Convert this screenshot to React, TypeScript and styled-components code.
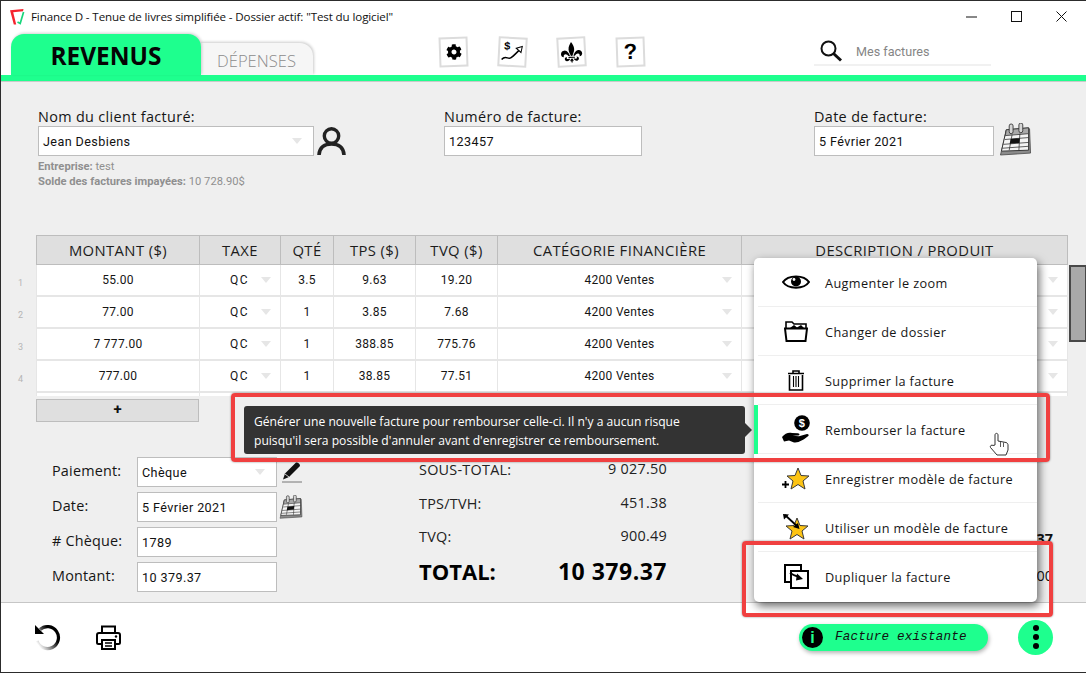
import styled, { createGlobalStyle } from "styled-components";
import { FaCog } from "react-icons/fa";
import { GiFleurDeLys } from "react-icons/gi";

const green = "#1EFF8E";
const lineGrey = "#BDBDBD";
const uiFont = `"Open Sans", "Noto Sans", sans-serif`;
const fieldFont = `Roboto, "Liberation Sans", sans-serif`;

const GlobalStyle = createGlobalStyle`
  html, body { margin: 0; padding: 0; background: #fff; }
  * { box-sizing: border-box; }
`;

const Window = styled.div`
  position: relative;
  width: 1086px;
  height: 673px;
  overflow: hidden;
  display: flex;
  flex-direction: column;
  background: #fff;
  border-top: 1px solid #2c2c2c;
  border-bottom: 1px solid #2c2c2c;
  border-left: 1px solid #2c2c2c;
  font-family: ${uiFont};
  color: #111;
`;

const TitleBar = styled.div`
  height: 31px;
  flex: none;
  display: flex;
  align-items: center;
  padding-left: 9px;
  gap: 6px;
  font-size: 11.6px;
  letter-spacing: -0.12px;
`;

const WindowControls = styled.div`
  margin-left: auto;
  padding-right: 2px;
  display: flex;
  align-items: center;
`;

const ControlBox = styled.span`
  width: 45px;
  height: 31px;
  display: flex;
  align-items: center;
  justify-content: center;
`;

const TabBar = styled.div`
  height: 43px;
  flex: none;
  display: flex;
  align-items: flex-end;
  padding-left: 10px;
`;

const ActiveTab = styled.div`
  width: 190px;
  height: 41px;
  background: ${green};
  border-radius: 13px 13px 0 0;
  box-shadow: 1px -1px 3px rgba(0, 0, 0, 0.18);
  font-size: 24.4px;
  font-weight: 700;
  line-height: 44px;
  text-align: center;
  color: #050505;
  position: relative;
  z-index: 1;
`;

const IdleTab = styled.div`
  width: 113px;
  height: 32px;
  margin-left: -1px;
  background: #f6f6f6;
  border-radius: 0 13px 0 0;
  box-shadow: 1px -1px 3px rgba(0, 0, 0, 0.2);
  font-size: 16.6px;
  font-weight: 300;
  line-height: 35px;
  text-align: center;
  color: #8c8c8c;
`;

const ToolIcons = styled.div`
  display: flex;
  gap: 30px;
  margin-left: 126px;
  align-self: flex-start;
  padding-top: 5px;
`;

const Sticker = styled.span<{ $tilt: number }>`
  width: 29px;
  height: 30px;
  display: flex;
  align-items: center;
  justify-content: center;
  background: #fff;
  border: 2px solid #dcdcdc;
  transform: rotate(${(p) => p.$tilt}deg);
  font-family: "Liberation Sans", sans-serif;
  font-size: 22px;
  font-weight: 700;
  color: #000;
`;

const SearchBox = styled.div`
  width: 177px;
  height: 28px;
  margin-left: 169px;
  align-self: flex-start;
  margin-top: 6px;
  display: flex;
  align-items: center;
  padding-left: 5px;
  border-bottom: 2px solid #f1f1f1;
`;

const SearchHint = styled.span`
  margin-left: 13px;
  padding-top: 1px;
  font-family: ${fieldFont};
  font-size: 12.6px;
  color: #858585;
`;

const GreenBar = styled.div`
  height: 7px;
  flex: none;
  background: ${green};
  border-bottom: 1px solid #c9c9c9;
`;

const Body = styled.main`
  height: 520px;
  flex: none;
  background: #efefef;
  display: flex;
  flex-direction: column;
`;

const TopForm = styled.section`
  height: 153px;
  flex: none;
  display: flex;
  padding: 25px 0 0 37px;
`;

const FieldGroup = styled.div<{ $width: number }>`
  width: ${(p) => p.$width}px;
  flex: none;
`;

const FieldLabel = styled.div`
  font-size: 14.4px;
  letter-spacing: 0.35px;
  line-height: 19px;
  color: #151515;
`;

const InputRow = styled.div`
  display: flex;
  align-items: center;
  height: 30px;
`;

const InputBox = styled.div<{ $width: number }>`
  width: ${(p) => p.$width}px;
  height: 30px;
  flex: none;
  display: flex;
  align-items: center;
  justify-content: space-between;
  padding: 0 11px 0 4px;
  background: #fff;
  border: 1px solid ${lineGrey};
  font-family: ${fieldFont};
  font-size: 12.6px;
  letter-spacing: 0.4px;
  color: #111;
`;

const Arrow = styled.i`
  display: inline-block;
  width: 0;
  height: 0;
  border-left: 5px solid transparent;
  border-right: 5px solid transparent;
  border-top: 6px solid #e6e6e6;
`;

const InfoBlock = styled.div`
  margin-top: 3px;
`;

const InfoLine = styled.div`
  font-family: ${fieldFont};
  font-size: 11.2px;
  line-height: 15px;
  color: #8f8f8f;
  b { font-weight: 700; }
`;

const CalendarSlot = styled.span`
  margin: -4px 0 0 5px;
  display: flex;
`;

const TableArea = styled.section`
  display: flex;
  flex: none;
  height: 161px;
`;

const TableClip = styled.div`
  width: 1068px;
  height: 161px;
  overflow: hidden;
`;

const GridRow = styled.div`
  display: grid;
  grid-template-columns: 35px 163px 81px 53px 82px 82px 244px 327px;
`;

const Gutter = styled.div`
  font-family: ${fieldFont};
  font-size: 9px;
  color: #b5b5b5;
  display: flex;
  align-items: center;
  justify-content: flex-end;
  padding: 3px 13px 0 0;
`;

const HeadCell = styled.div`
  height: 30px;
  background: #dfdfdf;
  border-top: 1px solid ${lineGrey};
  border-bottom: 1px solid ${lineGrey};
  border-left: 1px solid ${lineGrey};
  font-size: 14.8px;
  letter-spacing: 0.4px;
  line-height: 28px;
  text-align: center;
  color: #1c1c1c;
  &:last-child { border-right: 1px solid ${lineGrey}; }
`;

const Cell = styled.div`
  height: 32px;
  padding-bottom: 1px;
  background: #fff;
  border-bottom: 2px solid #e6e6e6;
  border-left: 1px solid #e6e6e6;
  font-family: ${fieldFont};
  font-size: 12px;
  letter-spacing: 0.3px;
  display: flex;
  align-items: center;
  justify-content: center;
  position: relative;
  color: #151515;
  &:last-child { border-right: 1px solid #e6e6e6; }
`;

const TaxCode = styled.span`
  margin-right: 1px;
  letter-spacing: 1.4px;
`;

const CellArrow = styled(Arrow)`
  position: absolute;
  right: 9px;
  top: 12px;
`;

const ScrollTrack = styled.div`
  width: 17px;
  flex: none;
  padding: 30px 0 0 0;
`;

const ScrollThumb = styled.div`
  width: 17px;
  height: 77px;
  background: #a9a9a9;
  border: 2px solid #484848;
  border-right: 1px solid #484848;
`;

const AddButton = styled.div`
  width: 163px;
  height: 23px;
  margin: 3px 0 0 35px;
  flex: none;
  background: #dfdfdf;
  border: 1px solid ${lineGrey};
  font-family: ${fieldFont};
  font-size: 15px;
  font-weight: 700;
  line-height: 19px;
  text-align: center;
`;

const BottomArea = styled.section`
  margin-top: 35px;
  display: flex;
  flex: none;
`;

const PaymentGrid = styled.div`
  width: 351px;
  flex: none;
  padding-left: 51px;
  display: grid;
  grid-template-columns: 85px 140px 30px;
  grid-auto-rows: 30px;
  row-gap: 5px;
  align-items: center;
  font-size: 14.4px;
  letter-spacing: 0.2px;
  line-height: 19px;
`;

const PayLabel = styled.div`
  margin-top: -3px;
  color: #151515;
`;

const IconSlot = styled.div<{ $left: number }>`
  padding-left: ${(p) => p.$left}px;
  display: flex;
  align-items: center;
`;

const TotalsTable = styled.div`
  width: 248px;
  margin-left: 67px;
  flex: none;
`;

const TotalLine = styled.div<{ $big?: boolean }>`
  display: flex;
  justify-content: space-between;
  align-items: flex-start;
  height: ${(p) => (p.$big ? 36 : 33.5)}px;
  font-size: ${(p) => (p.$big ? 22 : 14.4)}px;
  font-weight: ${(p) => (p.$big ? 700 : 400)};
  letter-spacing: ${(p) => (p.$big ? 0 : 0.25)}px;
  line-height: 26px;
  color: ${(p) => (p.$big ? "#000" : "#222")};
`;

const TotalValue = styled.span`
  line-height: 23px;
`;

const GrandValue = styled.span`
  font-size: 23px;
  letter-spacing: 0.5px;
`;

const SideValues = styled.div`
  flex: 1;
  padding: 63px 33px 0 0;
  text-align: right;
  font-size: 14.4px;
  line-height: 37px;
`;

const Footer = styled.footer`
  height: 70px;
  flex: none;
  display: flex;
  align-items: center;
  border-top: 1px solid #c6c6c6;
  padding: 0 33px 1px 33px;
`;

const FooterTools = styled.div`
  display: flex;
  gap: 35px;
  align-items: center;
`;

const StatusPill = styled.div`
  margin-left: auto;
  width: 189px;
  height: 27px;
  display: flex;
  align-items: center;
  gap: 12px;
  padding-left: 3px;
  background: ${green};
  border-radius: 14px;
  box-shadow: 1px 2px 4px rgba(0, 0, 0, 0.3);
  font-family: "Liberation Mono", monospace;
  font-size: 12.6px;
  font-style: italic;
  letter-spacing: 0.2px;
  color: #111;
`;

const InfoDot = styled.span`
  width: 21px;
  height: 21px;
  border-radius: 50%;
  background: #000;
  color: ${green};
  font-family: "Liberation Sans", sans-serif;
  font-style: normal;
  font-size: 16px;
  font-weight: 700;
  line-height: 22px;
  text-align: center;
`;

const MoreButton = styled.div`
  width: 35px;
  height: 35px;
  margin-left: 30px;
  border-radius: 50%;
  background: ${green};
  display: flex;
  flex-direction: column;
  align-items: center;
  justify-content: center;
  gap: 3px;
  span {
    width: 6px;
    height: 6px;
    border-radius: 50%;
    background: #000;
  }
`;

const Menu = styled.div`
  position: absolute;
  left: 753px;
  top: 257px;
  width: 283px;
  height: 344px;
  background: #fff;
  border-radius: 5px;
  box-shadow: 2px 4px 10px rgba(0, 0, 0, 0.6);
  padding-left: 4px;
`;

const MenuItem = styled.div<{ $active?: boolean }>`
  position: relative;
  height: 49px;
  display: flex;
  align-items: center;
  padding-left: 20px;
  gap: 11px;
  font-size: 12.7px;
  letter-spacing: 0.39px;
  color: #161616;
  border-bottom: 1px solid #efefef;
  &:last-child { border-bottom-color: transparent; }
  ${(p) =>
    p.$active &&
    `&::before {
      content: "";
      position: absolute;
      left: -4px;
      top: 0;
      bottom: -1px;
      width: 4px;
      background: ${green};
    }`}
`;

const MenuIcon = styled.span`
  width: 36px;
  height: 36px;
  flex: none;
  display: flex;
  align-items: center;
  justify-content: center;
`;

const MenuLabel = styled.span`
  padding-top: 2px;
`;

const HandCursor = styled.svg`
  position: absolute;
  left: 988px;
  top: 430px;
`;

const Tooltip = styled.div`
  position: absolute;
  left: 243px;
  top: 405px;
  width: 501px;
  height: 48px;
  padding: 6px 0 0 10px;
  background: #333;
  border-radius: 3px;
  color: #fff;
  font-size: 12.1px;
  line-height: 19px;
  &::after {
    content: "";
    position: absolute;
    right: -7px;
    top: 17px;
    border-top: 7px solid transparent;
    border-bottom: 7px solid transparent;
    border-left: 7px solid #333;
  }
`;

const RedFrame = styled.div<{ $x: number; $y: number; $w: number; $h: number }>`
  position: absolute;
  left: ${(p) => p.$x}px;
  top: ${(p) => p.$y}px;
  width: ${(p) => p.$w}px;
  height: ${(p) => p.$h}px;
  border: 4px solid #f04040;
  border-radius: 4px;
  box-shadow: 0 0 2px rgba(0, 0, 0, 0.5);
`;

const rows = [
  ["1", "55.00", "3.5", "9.63", "19.20"],
  ["2", "77.00", "1", "3.85", "7.68"],
  ["3", "7 777.00", "1", "388.85", "775.76"],
  ["4", "777.00", "1", "38.85", "77.51"],
];

const heads = ["MONTANT ($)", "TAXE", "QTÉ", "TPS ($)", "TVQ ($)", "CATÉGORIE FINANCIÈRE", "DESCRIPTION / PRODUIT"];

const starPath = "M12 1 L15 8.5 L23 9 L17 14 L19 22 L12 17.5 L5 22 L7 14 L1 9 L9 8.5 Z";

function Logo() {
  return (
    <svg width="15" height="16" viewBox="0 0 15 16">
      <path d="M0 1.2 L13.5 0 L13 2.2 L3.2 3.2 L6.2 15.5 L3.8 15.5 Z" fill="#f5232e" />
      <path d="M7.5 13 L10.2 14.5 L13.6 3" fill="none" stroke="#19d67c" strokeWidth="1.7" />
    </svg>
  );
}

function PersonIcon() {
  return (
    <svg width="32" height="30" viewBox="0 0 32 30">
      <circle cx="17.5" cy="10" r="7.2" fill="none" stroke="#222" strokeWidth="3.4" />
      <path d="M5 29 C5.5 21 11 18 17.5 18 C24 18 29.5 21 30 29" fill="none" stroke="#222" strokeWidth="3.6" />
    </svg>
  );
}

function CalendarIcon({ size }: { size: number }) {
  return (
    <svg width={size} height={size} viewBox="0 0 33 34">
      <path d="M7 8 L31 6 L32 31 L1 33 Z" fill="#8b8b8b" stroke="#444" strokeWidth="0.8" />
      <path d="M7 7 L30 5 L30 28 L2 29 Z" fill="#f4f4f4" stroke="#333" strokeWidth="1" />
      <path d="M7 7 L30 5 L30 11 L6 13 Z" fill="#a9a9a9" stroke="#333" strokeWidth="0.8" />
      <path d="M5.5 17 L30 15 M4 22 L30 20 M3 26 L30 24 M13 12 L10 28 M21 11 L20 28" stroke="#333" strokeWidth="0.8" />
      <path d="M11.5 16.5 L21 15.6 L20.5 20.6 L10.5 21.5 Z" fill="#111" />
      <rect x="10" y="1" width="4" height="10" rx="2" fill="#d5d5d5" stroke="#333" strokeWidth="0.9" />
      <rect x="20" y="0" width="4" height="10" rx="2" fill="#d5d5d5" stroke="#333" strokeWidth="0.9" />
    </svg>
  );
}

function ChartIcon() {
  return (
    <svg width="25" height="26" viewBox="0 0 25 26">
      <text x="4" y="11" fontFamily="Liberation Sans, sans-serif" fontSize="11" fontWeight="700" fill="#000">$</text>
      <path d="M2 21 C6 16 8 21 11 19 C14 17 15 15 20 10" fill="none" stroke="#000" strokeWidth="1.5" />
      <path d="M16 9 L22 7 L21 13 Z" fill="#fff" stroke="#000" strokeWidth="1" />
    </svg>
  );
}

function SearchIcon() {
  return (
    <svg width="24" height="22" viewBox="0 0 24 22">
      <circle cx="9.5" cy="8.5" r="7" fill="none" stroke="#111" strokeWidth="2" />
      <path d="M14.5 13.5 L22 20.5" stroke="#111" strokeWidth="3" />
    </svg>
  );
}

function EyeIcon() {
  return (
    <svg width="28" height="18" viewBox="0 0 28 18">
      <path d="M1 9 C6 1.5 22 1.5 27 9 C22 16.5 6 16.5 1 9 Z" fill="none" stroke="#000" strokeWidth="2" />
      <circle cx="14" cy="8.5" r="5" fill="#000" />
      <circle cx="12" cy="6.5" r="1.4" fill="#fff" />
    </svg>
  );
}

function FolderIcon() {
  return (
    <svg width="24" height="21" viewBox="0 0 24 21">
      <path d="M2 8 V1 H8 L10 3 H22 V8" fill="none" stroke="#000" strokeWidth="1.6" />
      <path d="M6 7 L10 4 L13 6.5 L17 4 L20 7 Z" fill="#000" />
      <path d="M1 7.5 H23 L21.5 20 H2.5 Z" fill="#fff" stroke="#000" strokeWidth="2" />
    </svg>
  );
}

function TrashIcon() {
  return (
    <svg width="18" height="21" viewBox="0 0 18 21">
      <path d="M1 3.5 H17 M6 3 V1 H12 V3" fill="none" stroke="#000" strokeWidth="1.6" />
      <path d="M2.5 5 V20 H15.5 V5" fill="none" stroke="#000" strokeWidth="1.6" />
      <path d="M6.5 6 V17 M9 6 V17 M11.5 6 V17" stroke="#000" strokeWidth="1.1" />
    </svg>
  );
}

function RefundIcon() {
  return (
    <svg width="28" height="28" viewBox="0 0 28 28">
      <circle cx="20" cy="8" r="7.8" fill="#000" />
      <text x="20" y="12" textAnchor="middle" fontFamily="Liberation Sans, sans-serif" fontSize="11" fontWeight="700" fill="#fff">$</text>
      <path d="M0 22 C3 18 7 17 10 18 L16 18.2 C18 18.5 18 20.5 16 20.6 L10.5 20.8 L17 21.2 L25 19 C27 19 27 20.6 26 21.3 C21 25 17 28 12 27.4 L7 25.6 L2 26.6 Z" fill="#000" />
    </svg>
  );
}

function SaveStarIcon() {
  return (
    <svg width="28" height="23" viewBox="0 0 28 23">
      <g transform="translate(4 0)">
        <path d={starPath} fill="#fdc414" stroke="#3a3a3a" strokeWidth="1" />
      </g>
      <path d="M0 17.5 H7 M3.5 14 V21" stroke="#000" strokeWidth="1.8" />
    </svg>
  );
}

function UseStarIcon() {
  return (
    <svg width="26" height="26" viewBox="0 0 26 26">
      <g transform="translate(2 3)">
        <path d={starPath} fill="#fdc414" stroke="#3a3a3a" strokeWidth="1" />
      </g>
      <path d="M2 1 L15 13" stroke="#000" strokeWidth="1.8" />
      <path d="M0 0 L6 0.5 L1 5.5 Z M16.5 15 L10 13 L15 9 Z" fill="#000" />
    </svg>
  );
}

function DuplicateIcon() {
  return (
    <svg width="25" height="25" viewBox="0 0 25 25">
      <rect x="1" y="1" width="16" height="17" fill="#fff" stroke="#000" strokeWidth="2" />
      <rect x="7" y="7" width="17" height="17" fill="#fff" stroke="#000" strokeWidth="2" />
      <path d="M6 9 C9 11 12 12 15 13" fill="none" stroke="#000" strokeWidth="2" />
      <path d="M13 9.5 L19 15 L12 16.5 Z" fill="#000" />
    </svg>
  );
}

function PencilIcon() {
  return (
    <svg width="22" height="22" viewBox="0 0 22 22">
      <path d="M4 12.5 L14.5 2 C16 0.8 19 2.5 19 5 L8 16 L2 18.5 Z" fill="#111" />
      <path d="M4 13 L8 16" stroke="#fff" strokeWidth="0.8" />
      <path d="M1 21 H21" stroke="#777" strokeWidth="1" />
    </svg>
  );
}

function UndoIcon() {
  return (
    <svg width="27" height="27" viewBox="0 0 27 27">
      <defs>
        <linearGradient id="undoFade" x1="0.1" y1="0.9" x2="0.75" y2="0.4">
          <stop offset="0" stopColor="#fff" />
          <stop offset="1" stopColor="#000" />
        </linearGradient>
      </defs>
      <path d="M6 5.5 A11 11 0 1 1 3 17" fill="none" stroke="url(#undoFade)" strokeWidth="3.2" />
      <path d="M1 1 L1 10 L10 10 Z" fill="#000" />
    </svg>
  );
}

function PrinterIcon() {
  return (
    <svg width="25" height="25" viewBox="0 0 25 25">
      <path d="M6 8 V1.5 H19 V8" fill="none" stroke="#000" strokeWidth="2" />
      <path d="M6 19 H2.5 C1.5 19 1 18.5 1 17.5 V10 C1 8.5 2 8 3 8 H22 C23 8 24 8.5 24 10 V17.5 C24 18.5 23.5 19 22.5 19 H19" fill="none" stroke="#000" strokeWidth="2" />
      <rect x="6" y="15" width="13" height="9" fill="#fff" stroke="#000" strokeWidth="2" />
      <path d="M9 18 H16 M9 21 H16" stroke="#000" strokeWidth="1.4" />
      <circle cx="20" cy="11.5" r="1.2" fill="#000" />
    </svg>
  );
}

function App() {
  return (
    <Window>
      <GlobalStyle />
      <TitleBar>
        <Logo />
        <span>Finance D - Tenue de livres simplifiée - Dossier actif: "Test du logiciel"</span>
        <WindowControls>
          <ControlBox>
            <svg width="11" height="2"><path d="M0 1 H11" stroke="#111" /></svg>
          </ControlBox>
          <ControlBox>
            <svg width="11" height="11"><rect x="0.5" y="0.5" width="10" height="10" fill="none" stroke="#111" /></svg>
          </ControlBox>
          <ControlBox>
            <svg width="11" height="11"><path d="M0.5 0.5 L10.5 10.5 M10.5 0.5 L0.5 10.5" stroke="#111" /></svg>
          </ControlBox>
        </WindowControls>
      </TitleBar>

      <TabBar>
        <ActiveTab>REVENUS</ActiveTab>
        <IdleTab>DÉPENSES</IdleTab>
        <ToolIcons>
          <Sticker $tilt={-2}><FaCog size={16} /></Sticker>
          <Sticker $tilt={3}><ChartIcon /></Sticker>
          <Sticker $tilt={-3}><GiFleurDeLys size={23} /></Sticker>
          <Sticker $tilt={-2}>?</Sticker>
        </ToolIcons>
        <SearchBox>
          <SearchIcon />
          <SearchHint>Mes factures</SearchHint>
        </SearchBox>
      </TabBar>
      <GreenBar />

      <Body>
        <TopForm>
          <FieldGroup $width={406}>
            <FieldLabel>Nom du client facturé:</FieldLabel>
            <InputRow>
              <InputBox $width={276}>Jean Desbiens<Arrow /></InputBox>
              <PersonIcon />
            </InputRow>
            <InfoBlock>
              <InfoLine><b>Entreprise:</b> test</InfoLine>
              <InfoLine><b>Solde des factures impayées:</b> 10 728.90$</InfoLine>
            </InfoBlock>
          </FieldGroup>
          <FieldGroup $width={370}>
            <FieldLabel>Numéro de facture:</FieldLabel>
            <InputBox $width={198}>123457</InputBox>
          </FieldGroup>
          <FieldGroup $width={220}>
            <FieldLabel>Date de facture:</FieldLabel>
            <InputRow>
              <InputBox $width={180}>5 Février 2021</InputBox>
              <CalendarSlot><CalendarIcon size={33} /></CalendarSlot>
            </InputRow>
          </FieldGroup>
        </TopForm>

        <TableArea>
          <TableClip>
            <GridRow>
              <Gutter />
              {heads.map((h) => <HeadCell key={h}>{h}</HeadCell>)}
            </GridRow>
            {[...rows, ["", "", "", "", ""]].map((r, i) => (
              <GridRow key={i}>
                <Gutter>{r[0]}</Gutter>
                <Cell>{r[1]}</Cell>
                <Cell><TaxCode>{i < 4 ? "QC" : ""}</TaxCode>{i < 4 && <CellArrow />}</Cell>
                <Cell>{r[2]}</Cell>
                <Cell>{r[3]}</Cell>
                <Cell>{r[4]}</Cell>
                <Cell>{i < 4 ? "4200 Ventes" : ""}{i < 4 && <CellArrow />}</Cell>
                <Cell>{i < 4 && <CellArrow />}</Cell>
              </GridRow>
            ))}
          </TableClip>
          <ScrollTrack><ScrollThumb /></ScrollTrack>
        </TableArea>
        <AddButton>+</AddButton>

        <BottomArea>
          <PaymentGrid>
            <PayLabel>Paiement:</PayLabel>
            <InputBox $width={140}>Chèque<Arrow /></InputBox>
            <IconSlot $left={4}><PencilIcon /></IconSlot>
            <PayLabel>Date:</PayLabel>
            <InputBox $width={140}>5 Février 2021</InputBox>
            <IconSlot $left={2}><CalendarIcon size={24} /></IconSlot>
            <PayLabel># Chèque:</PayLabel>
            <InputBox $width={140}>1789</InputBox>
            <span />
            <PayLabel>Montant:</PayLabel>
            <InputBox $width={140}>10 379.37</InputBox>
            <span />
          </PaymentGrid>
          <TotalsTable>
            <TotalLine><span>SOUS-TOTAL:</span><TotalValue>9 027.50</TotalValue></TotalLine>
            <TotalLine><span>TPS/TVH:</span><TotalValue>451.38</TotalValue></TotalLine>
            <TotalLine><span>TVQ:</span><TotalValue>900.49</TotalValue></TotalLine>
            <TotalLine $big><span>TOTAL:</span><GrandValue>10 379.37</GrandValue></TotalLine>
          </TotalsTable>
          <SideValues>
            <div><b>10 379.37</b></div>
            <div>0.00</div>
          </SideValues>
        </BottomArea>
      </Body>

      <Footer>
        <FooterTools>
          <UndoIcon />
          <PrinterIcon />
        </FooterTools>
        <StatusPill>
          <InfoDot>i</InfoDot>
          Facture existante
        </StatusPill>
        <MoreButton><span /><span /><span /></MoreButton>
      </Footer>

      <Menu>
        <MenuItem><MenuIcon><EyeIcon /></MenuIcon><MenuLabel>Augmenter le zoom</MenuLabel></MenuItem>
        <MenuItem><MenuIcon><FolderIcon /></MenuIcon><MenuLabel>Changer de dossier</MenuLabel></MenuItem>
        <MenuItem><MenuIcon><TrashIcon /></MenuIcon><MenuLabel>Supprimer la facture</MenuLabel></MenuItem>
        <MenuItem $active><MenuIcon><RefundIcon /></MenuIcon><MenuLabel>Rembourser la facture</MenuLabel></MenuItem>
        <MenuItem><MenuIcon><SaveStarIcon /></MenuIcon><MenuLabel>Enregistrer modèle de facture</MenuLabel></MenuItem>
        <MenuItem><MenuIcon><UseStarIcon /></MenuIcon><MenuLabel>Utiliser un modèle de facture</MenuLabel></MenuItem>
        <MenuItem><MenuIcon><DuplicateIcon /></MenuIcon><MenuLabel>Dupliquer la facture</MenuLabel></MenuItem>
      </Menu>

      <HandCursor width="20" height="26" viewBox="0 0 20 24">
        <path d="M6 13 V3 C6 0.8 9 0.8 9 3 V9 L17 10.5 C18.5 11 19 12 19 13 V18 L17 23 H8 L1.5 15.5 C0.5 13.5 3 12.5 4 13.5 Z" fill="#fff" stroke="#333" strokeWidth="1" />
        <path d="M11.5 10 V15 M14.5 10.5 V15" stroke="#333" strokeWidth="0.8" />
      </HandCursor>

      <Tooltip>
        Générer une nouvelle facture pour rembourser celle-ci. Il n'y a aucun risque<br />
        puisqu'il sera possible d'annuler avant d'enregistrer ce remboursement.
      </Tooltip>

      <RedFrame $x={230} $y={392} $w={819} $h={69} />
      <RedFrame $x={741} $y={540} $w={311} $h={76} />
    </Window>
  );
}

export default App;
